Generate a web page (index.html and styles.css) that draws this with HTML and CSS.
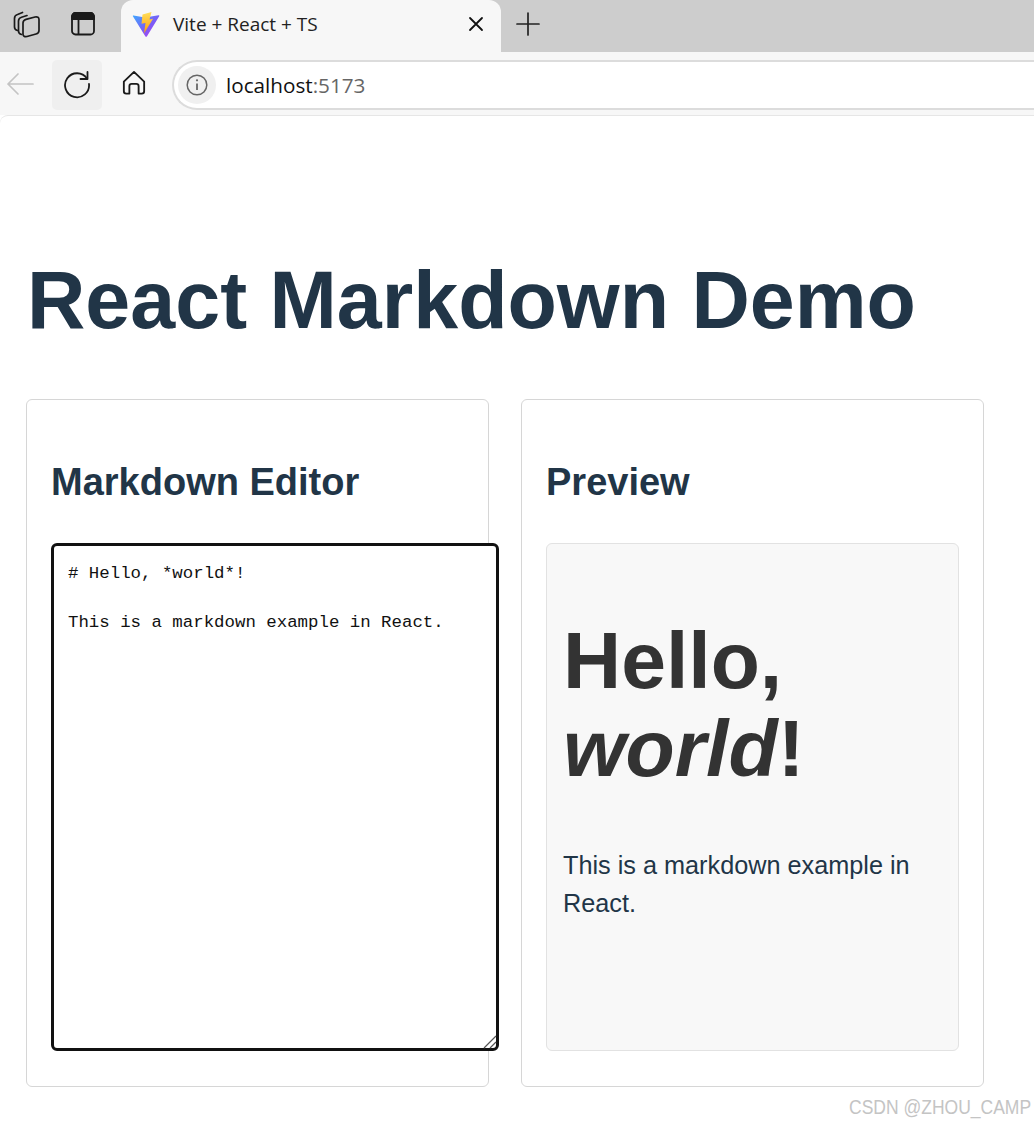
FILE: index.html
```html
<!DOCTYPE html>
<html lang="en">
<head>
<meta charset="utf-8">
<title>Vite + React + TS</title>
<link rel="stylesheet" href="styles.css">
</head>
<body>
<header class="browser">
  <div class="tabstrip">
    <div class="strip-icons">
      <svg class="ic" width="28" height="28" viewBox="0 0 28 28" fill="none" stroke="#1a1a1a" stroke-width="1.700" stroke-linejoin="round" stroke-linecap="round"><path d="M5.500 20.500C3.500 20 2.500 19 2.500 17V8.500C2.500 6.500 3.500 5 5.500 4.500L10.500 2.500"/><path d="M9.500 24.500C7.500 24 6.500 23 6.500 21V11C6.500 9 7.500 7.800 9.500 7.200L15 5.500"/><path d="M11 13C11 11 12 10 14 9.400L23 7C25.500 6.400 27 7.500 27 9.500V20.500C27 22.500 26 23.500 24 24L15 26.500C12.500 27 11 26 11 24z"/></svg>
      <svg class="ic" width="26" height="26" viewBox="0 0 26 26" fill="none" stroke="#1a1a1a" stroke-width="1.800"><rect x="2" y="2" width="22" height="21.500" rx="3.500"/><path d="M2 8h22V5.500A3.500 3.500 0 0 0 20.500 2H5.500A3.500 3.500 0 0 0 2 5.500z" fill="#1a1a1a"/><path d="M8.500 8v15.500"/></svg>
    </div>
    <div class="tab">
      <svg class="favicon" width="28" height="28" viewBox="0 0 28 28">
        <defs>
          <linearGradient id="viteA" x1="0" y1="0" x2="1" y2="1"><stop offset="0" stop-color="#3fa8ff"/><stop offset="0.550" stop-color="#7a5cf5"/><stop offset="1" stop-color="#c23cf2"/></linearGradient>
          <linearGradient id="viteB" x1="0" y1="0" x2="0" y2="1"><stop offset="0" stop-color="#ffdf5c"/><stop offset="1" stop-color="#ff9d0a"/></linearGradient>
        </defs>
        <path d="M1.500 5.500L13 7.500l13.500-2.300c.6-.1 1 .4.700 1L15 26.300c-.4.700-1.300.7-1.700 0L.9 6.300c-.3-.5.100-.9.600-.8z" fill="url(#viteA)"/>
        <path d="M10.500 4.500L19.500 2 17.500 9.500 21 8.800 12 23.500 13.500 13 9.500 13.800z" fill="url(#viteB)"/>
      </svg>
      <span class="tab-title">Vite + React + TS</span>
      <svg class="tab-close" width="16" height="16" viewBox="0 0 16 16" stroke="#111" stroke-width="1.800" stroke-linecap="round"><path d="M2 2l12 12M14 2L2 14"/></svg>
    </div>
    <svg class="newtab" width="26" height="26" viewBox="0 0 26 26" stroke="#222" stroke-width="1.700" stroke-linecap="round"><path d="M13 2v22M2 13h22"/></svg>
  </div>
  <div class="toolbar">
    <svg class="back" width="28" height="24" viewBox="0 0 28 24" fill="none" stroke="#c4c4c4" stroke-width="1.700" stroke-linecap="round" stroke-linejoin="round"><path d="M27 12H2M12 2L2 12l10 10"/></svg>
    <div class="reload">
      <svg class="reload-icon" width="30" height="30" viewBox="0 0 30 30" fill="none" stroke="#1a1a1a" stroke-width="1.800" stroke-linecap="round" stroke-linejoin="round"><path d="M25 9.500A12 12 0 1 0 27 15"/><path d="M25.500 3v7h-7"/></svg>
    </div>
    <svg class="home" width="24" height="26" viewBox="0 0 26 28" fill="none" stroke="#1a1a1a" stroke-width="2" stroke-linejoin="round"><path d="M2 12.500L13 2l11 10.500V23a2.500 2.500 0 0 1-2.500 2.500H18v-8a2.500 2.500 0 0 0-2.500-2.500h-5A2.500 2.500 0 0 0 8 17.500v8H4.500A2.500 2.500 0 0 1 2 23z"/></svg>
    <div class="address">
      <span class="info">
        <svg width="22" height="22" viewBox="0 0 22 22" fill="none" stroke="#666" stroke-width="1.500"><circle cx="11" cy="11" r="9.800"/><path d="M11 9.500v6.500" stroke-width="1.800"/><circle cx="11" cy="6.300" r="1.100" fill="#666" stroke="none"/></svg>
      </span>
      <span class="host">localhost<span class="port">:5173</span></span>
    </div>
  </div>
</header>
<main class="page">
  <h1 class="title">React Markdown Demo</h1>
  <div class="columns">
    <section class="card">
      <h2 class="card-title">Markdown Editor</h2>
      <div class="editor-wrap">
        <textarea class="editor" readonly># Hello, *world*!

This is a markdown example in React.</textarea>
        <svg class="grip" width="14" height="14" viewBox="0 0 14 14" fill="none" stroke="#555" stroke-width="1.200"><path d="M1 13L13 1M7 13l6-6"/></svg>
      </div>
    </section>
    <section class="card">
      <h2 class="card-title">Preview</h2>
      <div class="preview">
        <h1 class="preview-h1">Hello, <em>world</em>!</h1>
        <p class="preview-p">This is a markdown example in React.</p>
      </div>
    </section>
  </div>
</main>
<div class="watermark">CSDN @ZHOU_CAMP</div>
</body>
</html>
```
FILE: styles.css
```css
* { box-sizing: border-box; }
html, body { margin: 0; padding: 0; height: 1125px; overflow: hidden; background: #fff; }
body { font-family: "Liberation Sans", Arial, sans-serif; position: relative; }

.browser { background: #f7f7f7; }
.tabstrip { height: 52px; background: #cdcdcd; display: flex; align-items: center; padding-bottom: 5px; }
.strip-icons { width: 121px; display: flex; align-items: center; gap: 30px; padding-left: 12px; }
.ic { display: block; flex: none; }
.tab { width: 380px; height: 52px; margin-bottom: -5px; padding-bottom: 5px; background: #f7f7f7; border-radius: 12px 12px 0 0; display: flex; align-items: center; padding-left: 11px; padding-right: 17px; }
.favicon { flex: none; }
.tab-title { font-family: "Open Sans", "Noto Sans", sans-serif; font-size: 19px; color: #222; margin-left: 13px; flex: 1; white-space: nowrap; }
.newtab { margin-left: 14px; }

.toolbar { height: 63px; display: flex; align-items: center; padding-left: 6px; }
.back { flex: none; }
.reload { width: 50px; height: 50px; background: #efefef; border-radius: 5px; margin-left: 18px; margin-top: 2px; display: flex; align-items: center; justify-content: center; flex: none; padding-bottom: 2px; }
.home { flex: none; margin-left: 20px; margin-bottom: 1px; }
.address { flex: none; width: 880px; height: 50px; margin-left: 26px; margin-top: 2px; background: #fff; border: 2px solid #dcdcdc; border-right: 0; border-radius: 25px 0 0 25px; display: flex; align-items: center; padding-left: 4px; }
.info { width: 38px; height: 38px; border-radius: 50%; background: #f0f0f0; display: flex; align-items: center; justify-content: center; flex: none; }
.host { font-family: "Open Sans", "Noto Sans", sans-serif; font-size: 20.700px; color: #111; margin-left: 10px; }
.port { color: #666; }

.page { background: #fff; border-radius: 8px 0 0 0; border-top: 1px solid #e6e6e6; padding: 140px 0 0 26px; }
.title { margin: 0 0 0 1px; font-size: 80.800px; line-height: 88px; font-weight: 700; color: #213547; }
.columns { display: flex; gap: 32px; margin-top: 55px; }
.card { width: 463px; height: 688px; flex: none; border: 1px solid #d6d6d6; border-radius: 6px; padding: 60px 24px 0; }
.card-title { margin: 0; font-size: 38px; line-height: 44px; font-weight: 700; color: #213547; }
.editor-wrap { position: relative; margin-top: 39px; width: 448px; height: 508px; }
.editor { display: block; width: 100%; height: 100%; padding: 16px 14px; border: 3px solid #111; border-radius: 6px; background: #fff; color: #111; font-family: "Liberation Mono", monospace; font-size: 17.400px; line-height: 24.500px; outline: none; resize: none; }
.grip { position: absolute; right: 2px; bottom: 2px; }
.preview { margin-top: 39px; width: 413px; height: 508px; background: #f8f8f8; border: 1px solid #e2e2e2; border-radius: 6px; padding: 72px 16px 0; }
.preview-h1 { margin: 0; font-size: 80.500px; line-height: 88px; font-weight: 700; color: #333; }
.preview-p { margin: 54px 0 0; font-size: 25.250px; line-height: 38px; color: #213547; }

.watermark { position: absolute; right: 3px; top: 1095px; font-family: "Liberation Sans", sans-serif; font-size: 20px; line-height: 24px; color: #c4c4c4; white-space: nowrap; transform: scaleX(0.875); transform-origin: right center; }
```
